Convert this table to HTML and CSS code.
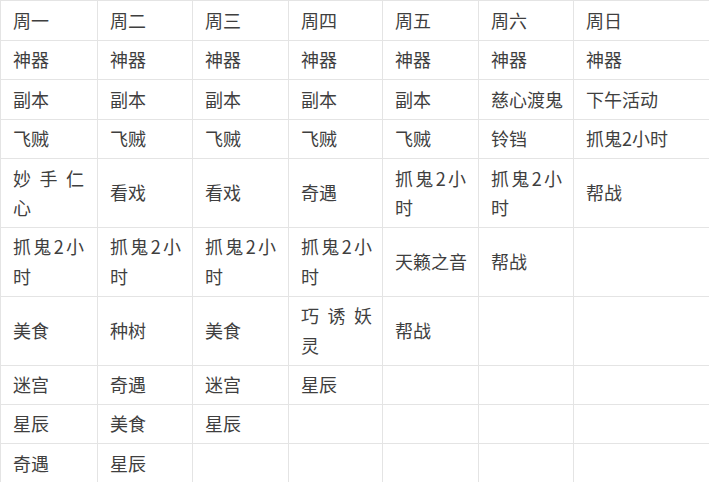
FILE: index.html
```html
<!DOCTYPE html>
<html lang="zh-CN">
<head>
<meta charset="utf-8">
<title>日程表</title>
<link rel="stylesheet" href="styles.css">
</head>
<body>
<table class="sched">
  <colgroup>
    <col class="c1"><col class="c2"><col class="c3"><col class="c4"><col class="c5"><col class="c6"><col class="c7">
  </colgroup>
  <tbody>
    <tr><td>周一</td><td>周二</td><td>周三</td><td>周四</td><td>周五</td><td>周六</td><td>周日</td></tr>
    <tr><td>神器</td><td>神器</td><td>神器</td><td>神器</td><td>神器</td><td>神器</td><td>神器</td></tr>
    <tr><td>副本</td><td>副本</td><td>副本</td><td>副本</td><td>副本</td><td>慈心渡鬼</td><td>下午活动</td></tr>
    <tr><td>飞贼</td><td>飞贼</td><td>飞贼</td><td>飞贼</td><td>飞贼</td><td>铃铛</td><td>抓鬼2小时</td></tr>
    <tr><td><div class="jw">妙手仁心</div></td><td>看戏</td><td>看戏</td><td>奇遇</td><td><div class="jw">抓鬼2小时</div></td><td><div class="jw">抓鬼2小时</div></td><td>帮战</td></tr>
    <tr><td><div class="jw">抓鬼2小时</div></td><td><div class="jw">抓鬼2小时</div></td><td><div class="jw">抓鬼2小时</div></td><td><div class="jw">抓鬼2小时</div></td><td>天籁之音</td><td>帮战</td><td></td></tr>
    <tr><td>美食</td><td>种树</td><td>美食</td><td><div class="jw">巧诱妖灵</div></td><td>帮战</td><td></td><td></td></tr>
    <tr><td>迷宫</td><td>奇遇</td><td>迷宫</td><td>星辰</td><td></td><td></td><td></td></tr>
    <tr><td>星辰</td><td>美食</td><td>星辰</td><td></td><td></td><td></td><td></td></tr>
    <tr><td>奇遇</td><td>星辰</td><td></td><td></td><td></td><td></td><td></td></tr>
  </tbody>
</table>
</body>
</html>
```
FILE: styles.css
```css
html, body {
  margin: 0;
  padding: 0;
  background: #ffffff;
  overflow: hidden;
}

.sched {
  border-collapse: collapse;
  table-layout: fixed;
  width: 709px;
  font-family: "Noto Sans CJK SC", "Noto Sans", sans-serif;
  font-size: 18px;
  color: #3f3f3f;
}

.c1 { width: 97px; }
.c2 { width: 95px; }
.c3 { width: 96px; }
.c4 { width: 94px; }
.c5 { width: 96px; }
.c6 { width: 95px; }
.c7 { width: 136px; }

.sched td {
  border: 1px solid #e4e4e4;
  padding: 4.5px 4px 4.5px 12px;
  line-height: 29.4px;
  vertical-align: middle;
  text-align: left;
  white-space: normal;
}

.sched td:last-child {
  border-right: none;
}

.sched tr:first-child td {
  padding-top: 5px;
}

.jw {
  width: 71px;
  text-align: justify;
}
```
